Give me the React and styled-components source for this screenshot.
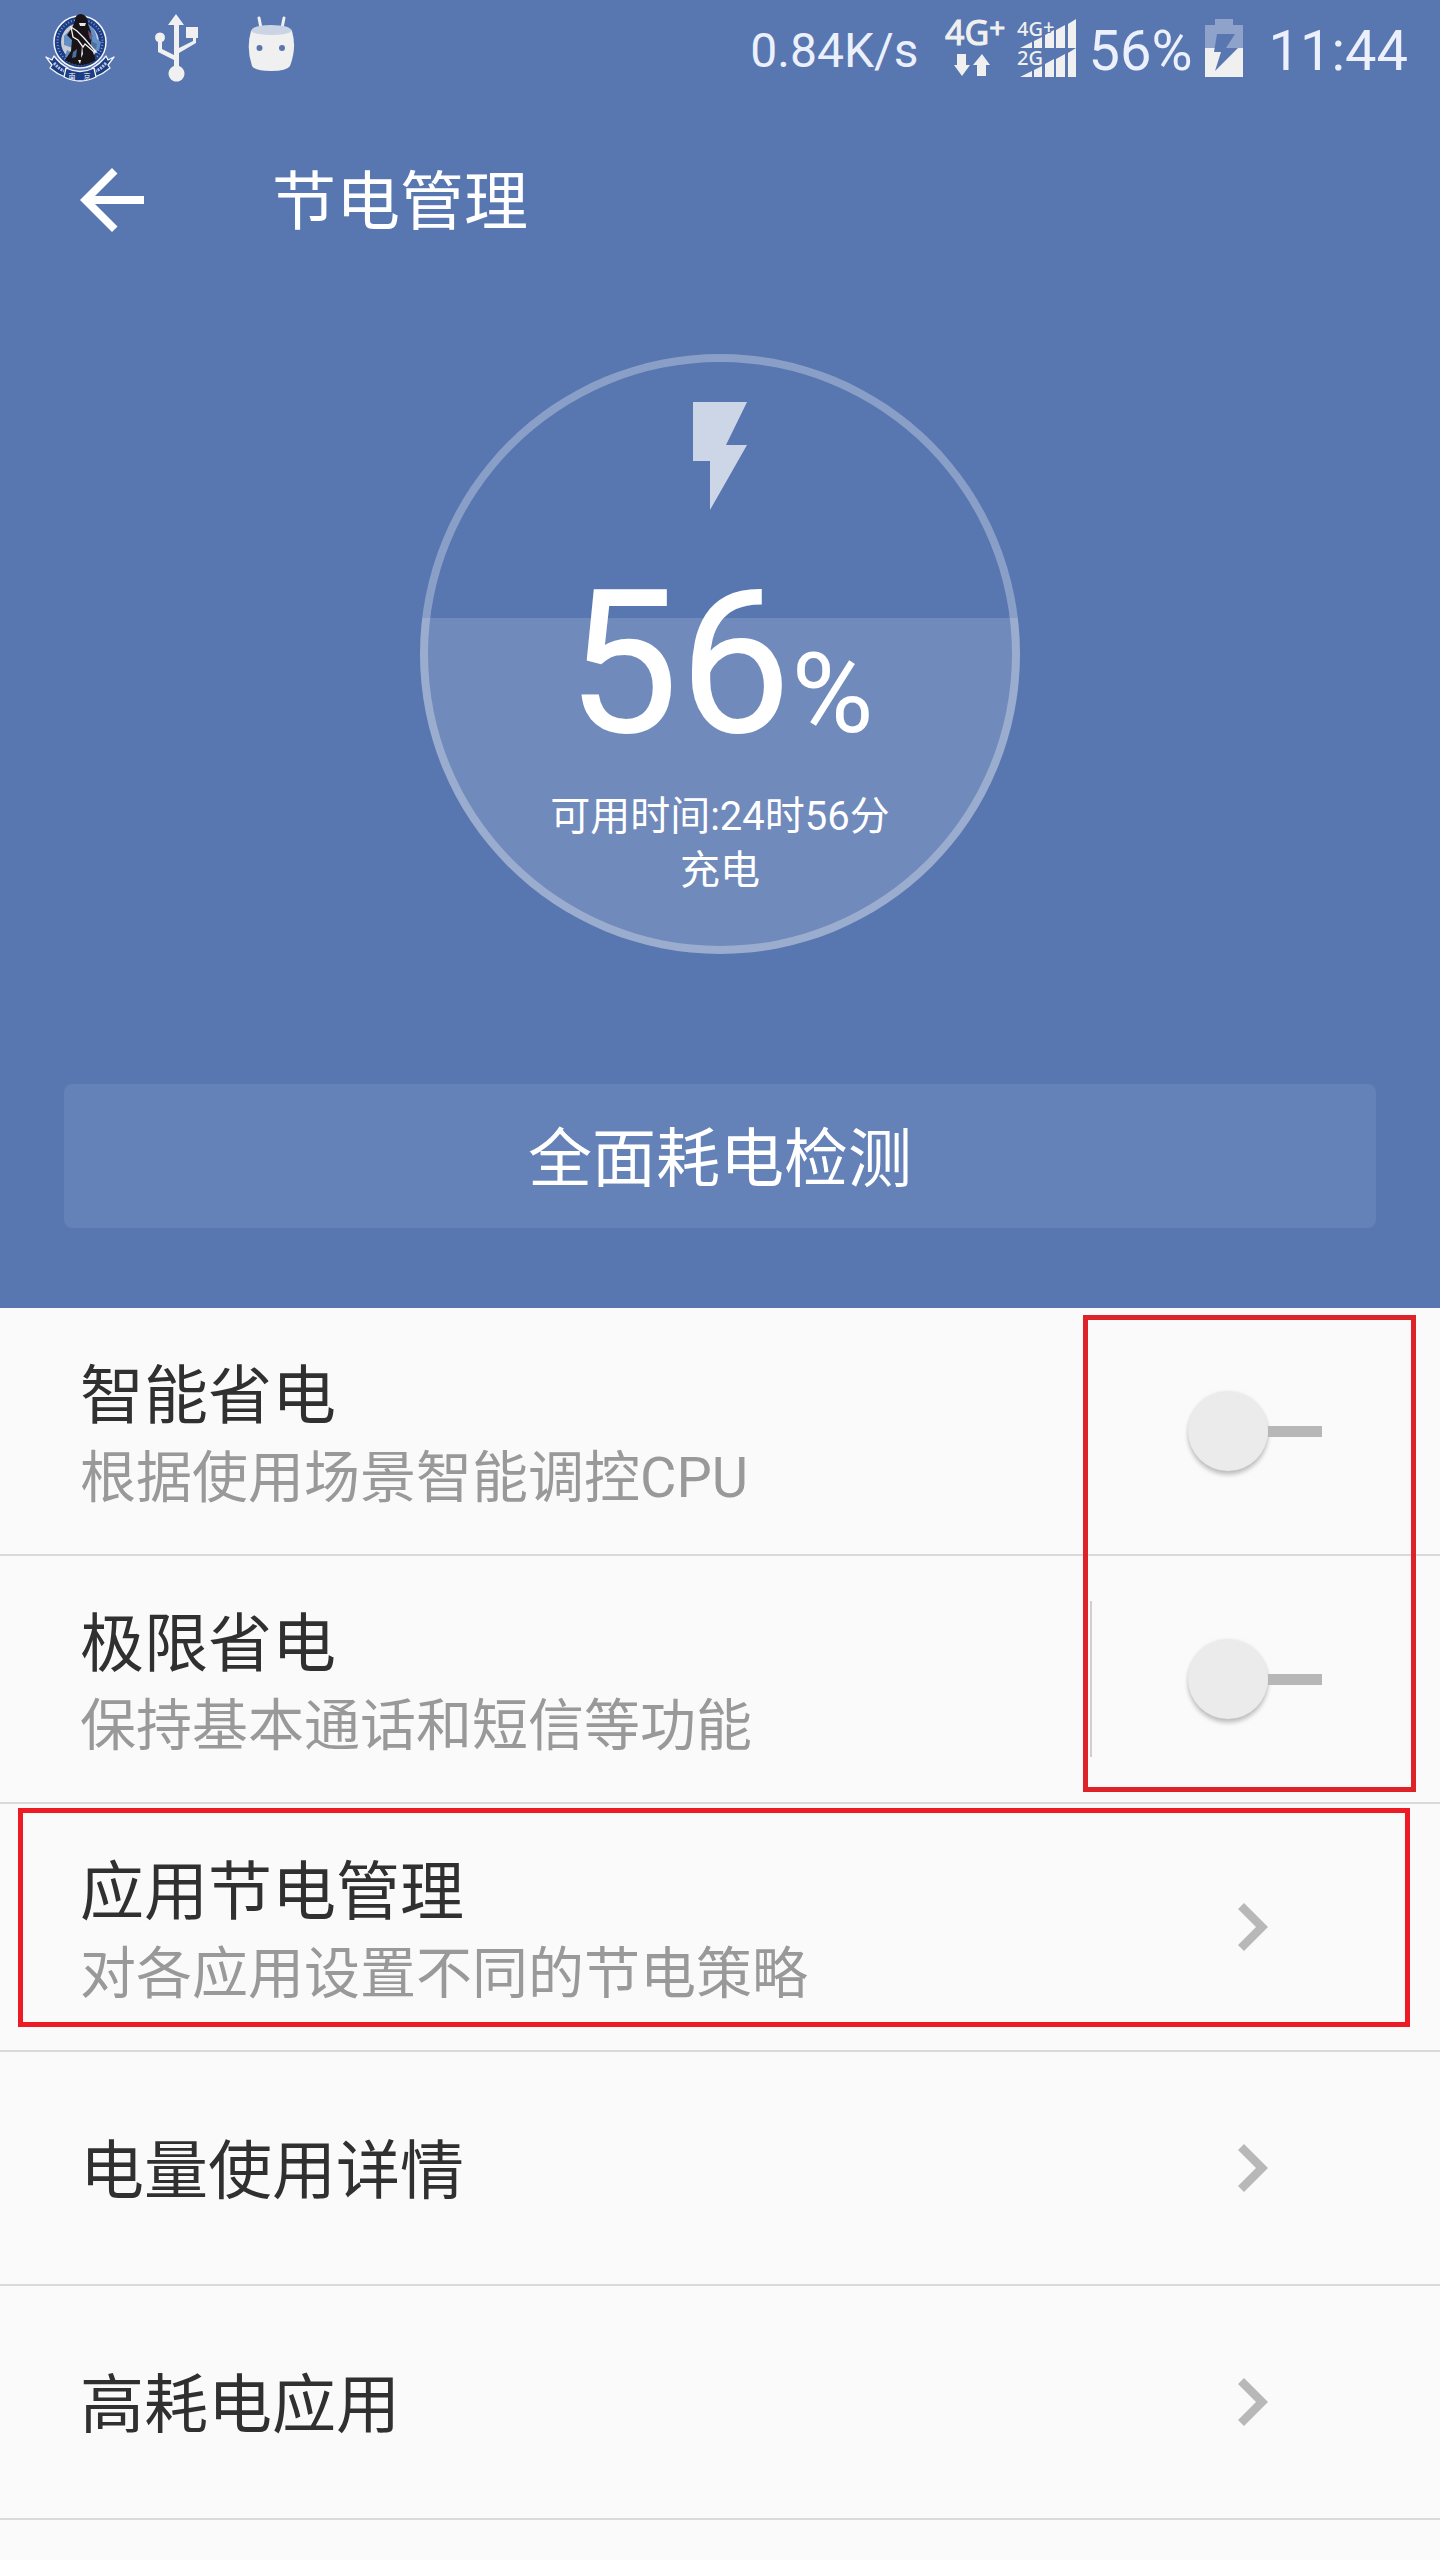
import React, { useState } from "react";
import styled, { createGlobalStyle } from "styled-components";

const GlobalStyle = createGlobalStyle`
  *, *::before, *::after { box-sizing: border-box; }
  body {
    margin: 0;
    background: #fafafa;
    font-family: Roboto, "Noto Sans CJK SC", sans-serif;
  }
  button { font-family: inherit; border: 0; padding: 0; cursor: pointer; }
`;

const Screen = styled.div`
  min-height: 100vh;
  background: #fafafa;
`;

const Hero = styled.header`
  display: flex;
  flex-direction: column;
  background: #5876af;
  color: #fff;
  padding-bottom: 80px;
`;

const StatusBar = styled.div`
  display: flex;
  justify-content: space-between;
  align-items: center;
  height: 96px;
  padding: 0 32px 0 44px;
  color: #ebf0fc;
`;

const StatusGroup = styled.div`
  display: flex;
  align-items: center;
  gap: ${(p) => p.$gap}px;
`;

const StatusText = styled.span`
  padding-top: 6px;
  font-size: ${(p) => p.$size}px;
  line-height: 64px;
`;

const StatusIcon = styled.svg`
  display: block;
  flex: none;
  width: ${(p) => p.$w}px;
  height: 96px;
  overflow: visible;
  fill: #f0f0f0;
`;

const TitleBar = styled.div`
  display: flex;
  align-items: center;
  gap: 128px;
  height: 208px;
  padding: 0 80px;
`;

const BackButton = styled.button`
  display: block;
  width: 64px;
  height: 64px;
  background: none;
  svg { display: block; }
`;

const Title = styled.h1`
  margin: 0;
  padding-top: 6px;
  font-size: 64px;
  line-height: 96px;
  font-weight: 400;
`;

const Gauge = styled.section`
  align-self: center;
  display: flex;
  flex-direction: column;
  align-items: center;
  width: 600px;
  height: 600px;
  margin-top: 50px;
  padding-top: 40px;
  border: 8px solid rgba(255, 255, 255, 0.3);
  border-radius: 50%;
  background: linear-gradient(rgba(255, 255, 255, 0.15), rgba(255, 255, 255, 0.15)) border-box
    bottom / 100% ${(p) => p.$level}% no-repeat;
`;

const Bolt = styled.svg`
  display: block;
  width: 54px;
  height: 108px;
  fill: #cdd6e7;
`;

const Level = styled.div`
  margin-top: 74px;
  font-size: 200px;
  line-height: 160px;
`;

const Percent = styled.span`
  font-size: 112px;
  line-height: 80px;
`;

const Remaining = styled.p`
  margin: 46px 0 0;
  font-size: 40px;
  line-height: 54px;
  text-align: center;
`;

const CheckButton = styled.button`
  height: 144px;
  margin: 130px 64px 0;
  padding-bottom: 6px;
  border-radius: 8px;
  background: #6482b7;
  color: #fff;
  font-size: 64px;
`;

const List = styled.main`
  position: relative;
`;

const Row = styled.div`
  display: flex;
  align-items: center;
  height: ${(p) => (p.$tall ? 248 : 234)}px;
  border-bottom: 2px solid #d9d9d9;
  color: inherit;
  text-decoration: none;
`;

const Labels = styled.div`
  flex: 1;
  padding: 7px 0 0 80px;
`;

const RowTitle = styled.div`
  display: block;
  color: #303030;
  font-size: 64px;
  line-height: 86px;
`;

const RowNote = styled.div`
  color: #999;
  font-size: 56px;
  line-height: 76px;
`;

const Action = styled.div`
  display: flex;
  align-items: center;
  width: 350px;
  height: 156px;
  padding-left: ${(p) => (p.$arrow ? 146 : 96)}px;
  border-left: 2px solid ${(p) => (p.$divided ? "#d5cdcd" : "transparent")};
`;

const Switch = styled.input`
  appearance: none;
  display: flex;
  align-items: center;
  width: 134px;
  height: 80px;
  margin: 0;
  cursor: pointer;
  &::before {
    content: "";
    flex: none;
    width: 80px;
    height: 80px;
    border-radius: 50%;
    background: #ebebeb;
    box-shadow: 0 4px 4px rgba(0, 0, 0, 0.22), 0 0 4px rgba(0, 0, 0, 0.06);
  }
  &::after {
    content: "";
    flex: 1;
    height: 11px;
    background: #b7b7b7;
  }
  &:checked { flex-direction: row-reverse; }
  &:checked::before { background: #5876af; }
`;

const Chevron = styled.svg`
  display: block;
  width: 30px;
  height: 48px;
  fill: #b8b8b8;
`;

const Highlight = styled.div`
  position: absolute;
  pointer-events: none;
  border: 5px solid ${(p) => p.$color};
`;

const SwitchHighlight = styled(Highlight)`
  top: 7px;
  right: 24px;
  width: 333px;
  height: 477px;
`;

const RowHighlight = styled(Highlight)`
  top: 500px;
  left: 18px;
  right: 30px;
  height: 219px;
`;

function Emblem() {
  return (
    <StatusIcon $w={72} viewBox="0 -8 72 96" aria-hidden="true">
      <circle cx="36" cy="34" r="26" fill="#1b3c86" stroke="#f4f6fa" strokeWidth="1.500" />
      <circle cx="36" cy="34" r="22.500" fill="none" stroke="#7f98c8" strokeWidth="2" strokeDasharray="1 2" />
      <circle cx="36" cy="34" r="19" fill="#c9cbd0" />
      <path d="M20 28l8-8 4 8-3 12-9-3zM44 16q8 5 9 15l4 3-2 9-9-1zM23 42l6 3-2 6-6-2z" fill="#648ec6" />
      <path d="M31 13Q31 6 37 6Q44 7 44 16L47 24L48 42L52 52Q36 62 21 52L27 43L28 32L23 27L28 20Z" fill="#171316" />
      <path d="M44 22l5 6-3 4zM47 33l6 3-1 5-5-1zM29 44l4-3-1 8-4 1z" fill="#4d6f9f" />
      <path d="M35 15h7l-1 3h-5z" fill="#e6e6e8" />
      <path d="M27 19l6 4 7 7 12 14-3-1-8-7-2 3-5-7-5-3z" fill="#171316" stroke="#f2f2f2" strokeWidth="1.300" />
      <path d="M38 37l1 9-2 4zM34 52l2 4 1-4z" fill="#f2f2f2" />
      <path d="M44 27l2-3 1 4z" fill="#b3262e" />
      <g fill="#1c3c83" stroke="#f3f5fa" strokeWidth="1.300" strokeLinejoin="round">
        <path d="M2 49L8 52L10 48Q16 56 24 60L21 69Q13 66 6 60L8 57Z" />
        <path d="M70 49L64 52L62 48Q56 56 48 60L51 69Q59 66 66 60L64 57Z" />
        <path d="M22 60Q36 67 50 60L52 69Q36 77 20 69Z" />
      </g>
      <path d="M10 55Q15 61 20 63M62 55Q57 61 52 63" fill="none" stroke="#b7c4de" strokeWidth="3" strokeDasharray="2 1" />
      <text x="28" y="71" fontSize="7" fill="#fff" textAnchor="middle">南</text>
      <text x="43" y="71" fontSize="7" fill="#fff" textAnchor="middle">京</text>
    </StatusIcon>
  );
}

function UsbIcon() {
  return (
    <StatusIcon $w={56} viewBox="154 0 56 96" aria-hidden="true">
      <path d="M176 14L184 25H179V48L193 41V38H186V27H198V38H196V43L179 53V66A8 8 0 1 1 174 66V60L158 52V42A5 5 0 1 1 162 42V49L174 55V25H168Z" />
    </StatusIcon>
  );
}

function DroidIcon() {
  return (
    <StatusIcon $w={46} viewBox="249 0 46 96" aria-hidden="true">
      <path d="M260 18l2 10M285 18l-2 10" stroke="#f0f0f0" strokeWidth="3" strokeLinecap="round" />
      <path d="M252 31Q272 22 293 31Q298 48 291 66Q288 71 272 71Q256 71 253 66Q247 48 252 31Z" />
      <path d="M252 31Q254 25 272 25Q291 25 293 31Q289 35 272 35Q256 35 252 31Z" fill="#cbd4e4" />
      <circle cx="260.500" cy="48" r="3" fill="#5876af" />
      <circle cx="283" cy="48" r="3" fill="#5876af" />
    </StatusIcon>
  );
}

function NetworkIcon() {
  return (
    <StatusIcon $w={60} viewBox="944 0 60 96" aria-label="4G+">
      <text x="944" y="45" fontFamily="Noto Sans, sans-serif" fontSize="34" stroke="#f0f0f0">
        4G<tspan fontSize="28" dy="-7">+</tspan>
      </text>
      <path d="M956 54h9v11h4l-8 11-8-11h3zM981 54l8 11h-4v11h-9V65h-4z" />
    </StatusIcon>
  );
}

function SignalIcon() {
  const ramp = (y) => (
    <path
      transform={`translate(0 ${y})`}
      d="M1019 48L1031 42V48ZM1033 48V41L1041 37V48ZM1044 48V35L1053 30V48ZM1055 48V30L1064 25V48ZM1067 48V24L1075 19V48Z"
    />
  );
  return (
    <StatusIcon $w={60} viewBox="1016 0 60 96" aria-label="4G+ 2G">
      {ramp(0)}
      {ramp(29)}
      <g fontFamily="Noto Sans, sans-serif" fontSize="20" fontWeight="500" stroke="#5876af" strokeWidth="2" paintOrder="stroke">
        <text x="1016" y="36">4G<tspan dy="-2">+</tspan></text>
        <text x="1016" y="65">2G</text>
      </g>
    </StatusIcon>
  );
}

function BatteryIcon() {
  return (
    <StatusIcon $w={38} viewBox="1204 0 38 96" aria-hidden="true">
      <path d="M1214 19h18v6h10v23h-38V25h10z" fill="#8fa3ca" />
      <path d="M1204 48h38v29h-38z" />
      <path d="M1216 34h18l-9 14h12l-23 23 6-19h-7z" fill="#5876af" />
    </StatusIcon>
  );
}

function ToggleRow({ id, title, note, divided }) {
  const [on, setOn] = useState(false);
  return (
    <Row $tall>
      <Labels>
        <RowTitle as="label" htmlFor={id}>{title}</RowTitle>
        <RowNote>{note}</RowNote>
      </Labels>
      <Action $divided={divided}>
        <Switch id={id} type="checkbox" role="switch" checked={on} onChange={() => setOn(!on)} />
      </Action>
    </Row>
  );
}

function LinkRow({ title, note }) {
  return (
    <Row as="a" href="#" $tall={Boolean(note)}>
      <Labels>
        <RowTitle>{title}</RowTitle>
        {note && <RowNote>{note}</RowNote>}
      </Labels>
      <Action $arrow>
        <Chevron viewBox="0 0 30 48" aria-hidden="true">
          <path d="M6 0L30 24L6 48L0 42L18 24L0 6Z" />
        </Chevron>
      </Action>
    </Row>
  );
}

export default function App() {
  return (
    <Screen>
      <GlobalStyle />
      <Hero>
        <StatusBar>
          <StatusGroup $gap={38}>
            <Emblem />
            <UsbIcon />
            <DroidIcon />
          </StatusGroup>
          <StatusGroup $gap={26}>
            <StatusText $size={48}>0.84K/s</StatusText>
            <StatusGroup $gap={12}>
              <NetworkIcon />
              <SignalIcon />
              <StatusText $size={56}>56%</StatusText>
              <BatteryIcon />
            </StatusGroup>
            <StatusText $size={56}>11:44</StatusText>
          </StatusGroup>
        </StatusBar>
        <TitleBar>
          <BackButton type="button" aria-label="返回">
            <svg width="64" height="64" viewBox="0 0 64 64" fill="#fff">
              <path d="M32 0L37.500 5.500L15 28H64V36H15L37.500 58.500L32 64L0 32Z" />
            </svg>
          </BackButton>
          <Title>节电管理</Title>
        </TitleBar>
        <Gauge $level={56}>
          <Bolt viewBox="0 0 54 108" aria-hidden="true">
            <path d="M0 0H54L33 43H54L17 108V59H0Z" />
          </Bolt>
          <Level>
            56<Percent>%</Percent>
          </Level>
          <Remaining>
            可用时间:24时56分
            <br />
            充电
          </Remaining>
        </Gauge>
        <CheckButton type="button">全面耗电检测</CheckButton>
      </Hero>
      <List>
        <ToggleRow id="smart" title="智能省电" note="根据使用场景智能调控CPU" />
        <ToggleRow id="extreme" title="极限省电" note="保持基本通话和短信等功能" divided />
        <LinkRow title="应用节电管理" note="对各应用设置不同的节电策略" />
        <LinkRow title="电量使用详情" />
        <LinkRow title="高耗电应用" />
        <SwitchHighlight $color="#dd222a" />
        <RowHighlight $color="#ed1c24" />
      </List>
    </Screen>
  );
}
